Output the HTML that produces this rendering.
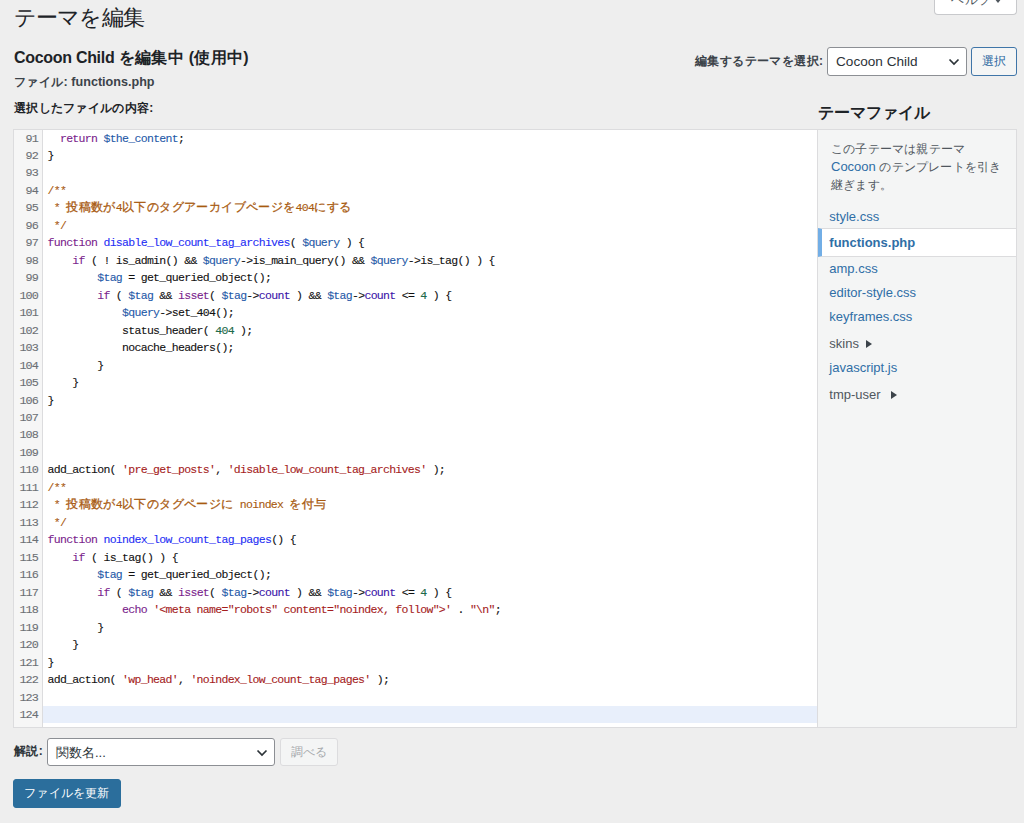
<!DOCTYPE html>
<html><head><meta charset="utf-8">
<style>
*{box-sizing:border-box}
html,body{margin:0;padding:0}
body{width:1024px;height:823px;overflow:hidden;background:#eeeeee;font-family:"Liberation Sans",sans-serif;color:#1d2327;position:relative}
.abs{position:absolute;white-space:nowrap}
#help{left:934px;top:-8px;width:83px;height:23px;background:#fff;border:1px solid #c8c9cc;border-top:none;border-radius:0 0 4px 4px;font-size:13px;color:#50575e}
#h1{left:14px;top:2.5px;font-size:22px;letter-spacing:-0.85px;color:#1d2327}
#h2{left:14px;top:48px;font-size:16px;font-weight:bold;color:#1d2327}
#fname{left:14px;top:74px;font-size:13px;font-weight:bold;color:#3c434a}
#lbl{left:14px;top:100px;font-size:12px;letter-spacing:0.3px;font-weight:bold;color:#1d2327}
#selLbl{left:695px;top:53px;font-size:12px;letter-spacing:0.4px;font-weight:bold;color:#3c434a}
.jp12{font-size:12px;letter-spacing:0.4px}
.select{position:absolute;background:#fff;border:1px solid #8c8f94;border-radius:3px;font-size:14px;color:#2c3338}
.btn2{position:absolute;background:#f4f5f5;border:1px solid #3f75a8;border-radius:3px;color:#2a66a0;font-size:12px;text-align:center}
#tfh{left:818px;top:103px;font-size:16px;font-weight:bold;color:#1d2327}
#editor{position:absolute;left:13px;top:129px;width:805px;height:599px;background:#fff;border:1px solid #dcdcde;overflow:hidden}
#gutter{position:absolute;left:0;top:0;width:29px;height:100%;background:#f6f6f6;border-right:1px solid #dcdcde}
#code{position:absolute;left:0;top:-0.5px;width:100%;font-family:"Liberation Mono",monospace;font-size:11.5px;letter-spacing:-0.69px;line-height:17.47px;color:#111;-webkit-text-stroke:0.1px}
.ln{display:block;height:17.47px;position:relative;white-space:pre}
.ln .n{position:absolute;left:0;top:1px;width:24px;text-align:right;color:#6b6f74;font-size:11.8px;letter-spacing:-0.88px}
.ln .t{position:absolute;left:33.5px}
.ln.act{background:linear-gradient(to right,transparent 29px,#e8effb 29px)}

.j{font-size:12px;letter-spacing:0.4px;-webkit-text-stroke:0.3px}
.k{color:#7a1e8c}.d{color:#1f2ff5}.v{color:#1f5aa8}.s{color:#a51d1d}.m{color:#1d6a4a}.c{color:#a85a10}.p{color:#3a14a8}
#side{position:absolute;left:817px;top:129px;width:200px;height:599px;background:#f4f5f5;border:1px solid #dcdcde}
.desc{position:absolute;left:13px;top:10.5px;font-size:12px;letter-spacing:0.2px;line-height:17.6px;color:#50575e;white-space:nowrap}
.fl{position:absolute;left:11.3px;font-size:13px;color:#2f6ea6;white-space:nowrap}
#active{position:absolute;left:0;top:98px;width:198px;height:29px;background:#fff;border-top:1px solid #dcdcde;border-bottom:1px solid #dcdcde;border-left:4px solid #72aee6}
.fold{color:#50575e}
.tri{display:inline-block;width:0;height:0;border-left:6px solid #3c434a;border-top:4px solid transparent;border-bottom:4px solid transparent;margin-left:7px;vertical-align:0px}
#docLbl{left:14px;top:743px;font-size:12px;letter-spacing:0.4px;font-weight:bold;color:#2c3338}
.btnd{position:absolute;background:#f4f5f5;border:1px solid #dcdcde;border-radius:3px;color:#a7aaad;font-size:12px;letter-spacing:0.3px;text-align:center}
.btnp{position:absolute;background:#2b6e9c;border:1px solid #2b6e9c;border-radius:3px;color:#fff;font-size:12px;letter-spacing:0.2px;text-align:center}
.chev{position:absolute;width:12px;height:8px}
</style></head><body>
<div id="help" class="abs"><span style="position:absolute;left:16px;top:-1px;font-size:13px;letter-spacing:0.5px">ヘルプ</span><span style="position:absolute;left:58.5px;top:5.5px;width:0;height:0;border-top:5px solid #50575e;border-left:4px solid transparent;border-right:4px solid transparent"></span></div>
<div id="h1" class="abs">テーマを編集</div>
<div id="h2" class="abs"><span style="letter-spacing:-0.3px">Cocoon Child</span> <span style="letter-spacing:0.3px">を編集中 (使用中)</span></div>
<div id="fname" class="abs"><span class="jp12">ファイル</span><span style="font-size:12.6px">: functions.php</span></div>
<div id="lbl" class="abs">選択したファイルの内容:</div>
<div id="selLbl" class="abs">編集するテーマを選択:</div>
<div class="select" style="left:827px;top:47px;width:140px;height:29px"><span class="abs" style="left:8px;top:6px;font-size:13.6px">Cocoon Child</span><svg class="chev" style="left:120px;top:10px" viewBox="0 0 12 8"><path d="M1.5 1.5 L6 6 L10.5 1.5" fill="none" stroke="#2c3338" stroke-width="1.7"/></svg></div>
<div class="btn2" style="left:971px;top:47px;width:46px;height:29px;line-height:27px">選択</div>
<div id="tfh" class="abs">テーマファイル</div>
<div id="editor">
<div id="gutter"></div>
<div id="code">
<div class="ln"><span class="n">91</span><span class="t">  <span class="k">return</span> <span class="v">$the_content</span>;</span></div>
<div class="ln"><span class="n">92</span><span class="t">}</span></div>
<div class="ln"><span class="n">93</span><span class="t"></span></div>
<div class="ln"><span class="n">94</span><span class="t"><span class="c">/**</span></span></div>
<div class="ln"><span class="n">95</span><span class="t"><span class="c"> * <span class="j">投稿数が</span>4<span class="j">以下のタグアーカイブページを</span>404<span class="j">にする</span></span></span></div>
<div class="ln"><span class="n">96</span><span class="t"><span class="c"> */</span></span></div>
<div class="ln"><span class="n">97</span><span class="t"><span class="k">function</span> <span class="d">disable_low_count_tag_archives</span>( <span class="v">$query</span> ) {</span></div>
<div class="ln"><span class="n">98</span><span class="t">    <span class="k">if</span> ( ! is_admin() &amp;&amp; <span class="v">$query</span>-&gt;is_main_query() &amp;&amp; <span class="v">$query</span>-&gt;is_tag() ) {</span></div>
<div class="ln"><span class="n">99</span><span class="t">        <span class="v">$tag</span> = get_queried_object();</span></div>
<div class="ln"><span class="n">100</span><span class="t">        <span class="k">if</span> ( <span class="v">$tag</span> &amp;&amp; <span class="k">isset</span>( <span class="v">$tag</span>-&gt;<span class="p">count</span> ) &amp;&amp; <span class="v">$tag</span>-&gt;<span class="p">count</span> &lt;= <span class="m">4</span> ) {</span></div>
<div class="ln"><span class="n">101</span><span class="t">            <span class="v">$query</span>-&gt;set_404();</span></div>
<div class="ln"><span class="n">102</span><span class="t">            status_header( <span class="m">404</span> );</span></div>
<div class="ln"><span class="n">103</span><span class="t">            nocache_headers();</span></div>
<div class="ln"><span class="n">104</span><span class="t">        }</span></div>
<div class="ln"><span class="n">105</span><span class="t">    }</span></div>
<div class="ln"><span class="n">106</span><span class="t">}</span></div>
<div class="ln"><span class="n">107</span><span class="t"></span></div>
<div class="ln"><span class="n">108</span><span class="t"></span></div>
<div class="ln"><span class="n">109</span><span class="t"></span></div>
<div class="ln"><span class="n">110</span><span class="t">add_action( <span class="s">'pre_get_posts'</span>, <span class="s">'disable_low_count_tag_archives'</span> );</span></div>
<div class="ln"><span class="n">111</span><span class="t"><span class="c">/**</span></span></div>
<div class="ln"><span class="n">112</span><span class="t"><span class="c"> * <span class="j">投稿数が</span>4<span class="j">以下のタグページに</span> noindex <span class="j">を付与</span></span></span></div>
<div class="ln"><span class="n">113</span><span class="t"><span class="c"> */</span></span></div>
<div class="ln"><span class="n">114</span><span class="t"><span class="k">function</span> <span class="d">noindex_low_count_tag_pages</span>() {</span></div>
<div class="ln"><span class="n">115</span><span class="t">    <span class="k">if</span> ( is_tag() ) {</span></div>
<div class="ln"><span class="n">116</span><span class="t">        <span class="v">$tag</span> = get_queried_object();</span></div>
<div class="ln"><span class="n">117</span><span class="t">        <span class="k">if</span> ( <span class="v">$tag</span> &amp;&amp; <span class="k">isset</span>( <span class="v">$tag</span>-&gt;<span class="p">count</span> ) &amp;&amp; <span class="v">$tag</span>-&gt;<span class="p">count</span> &lt;= <span class="m">4</span> ) {</span></div>
<div class="ln"><span class="n">118</span><span class="t">            <span class="k">echo</span> <span class="s">'&lt;meta name="robots" content="noindex, follow"&gt;'</span> . <span class="s">"\n"</span>;</span></div>
<div class="ln"><span class="n">119</span><span class="t">        }</span></div>
<div class="ln"><span class="n">120</span><span class="t">    }</span></div>
<div class="ln"><span class="n">121</span><span class="t">}</span></div>
<div class="ln"><span class="n">122</span><span class="t">add_action( <span class="s">'wp_head'</span>, <span class="s">'noindex_low_count_tag_pages'</span> );</span></div>
<div class="ln"><span class="n">123</span><span class="t"></span></div>
<div class="ln act"><span class="n">124</span><span class="t"></span></div>
</div>
</div>
<div id="side">
<div class="desc">この子テーマは親テーマ<br><span style="color:#2f6ea6;font-size:13px;letter-spacing:0">Cocoon</span> のテンプレートを引き<br>継ぎます。</div>
<div id="active"></div>
<div class="fl" style="top:79px">style.css</div>
<div class="fl" style="top:105px;font-weight:bold">functions.php</div>
<div class="fl" style="top:131px">amp.css</div>
<div class="fl" style="top:155px">editor-style.css</div>
<div class="fl" style="top:179px">keyframes.css</div>
<div class="fl fold" style="top:206px">skins<span class="tri" style="margin-left:7px"></span></div>
<div class="fl" style="top:230px">javascript.js</div>
<div class="fl fold" style="top:257px">tmp-user<span class="tri" style="margin-left:10px"></span></div>
</div>
<div id="docLbl" class="abs">解説:</div>
<div class="select" style="left:47px;top:738px;width:228px;height:28px"><span class="abs" style="left:8px;top:5px;font-size:13px">関数名...</span><svg class="chev" style="left:208px;top:10px" viewBox="0 0 12 8"><path d="M1.5 1.5 L6 6 L10.5 1.5" fill="none" stroke="#2c3338" stroke-width="1.7"/></svg></div>
<div class="btnd" style="left:280px;top:738px;width:58px;height:28px;line-height:26px">調べる</div>
<div class="btnp" style="left:13px;top:779px;width:108px;height:29px;line-height:27px">ファイルを更新</div>
</body></html>
